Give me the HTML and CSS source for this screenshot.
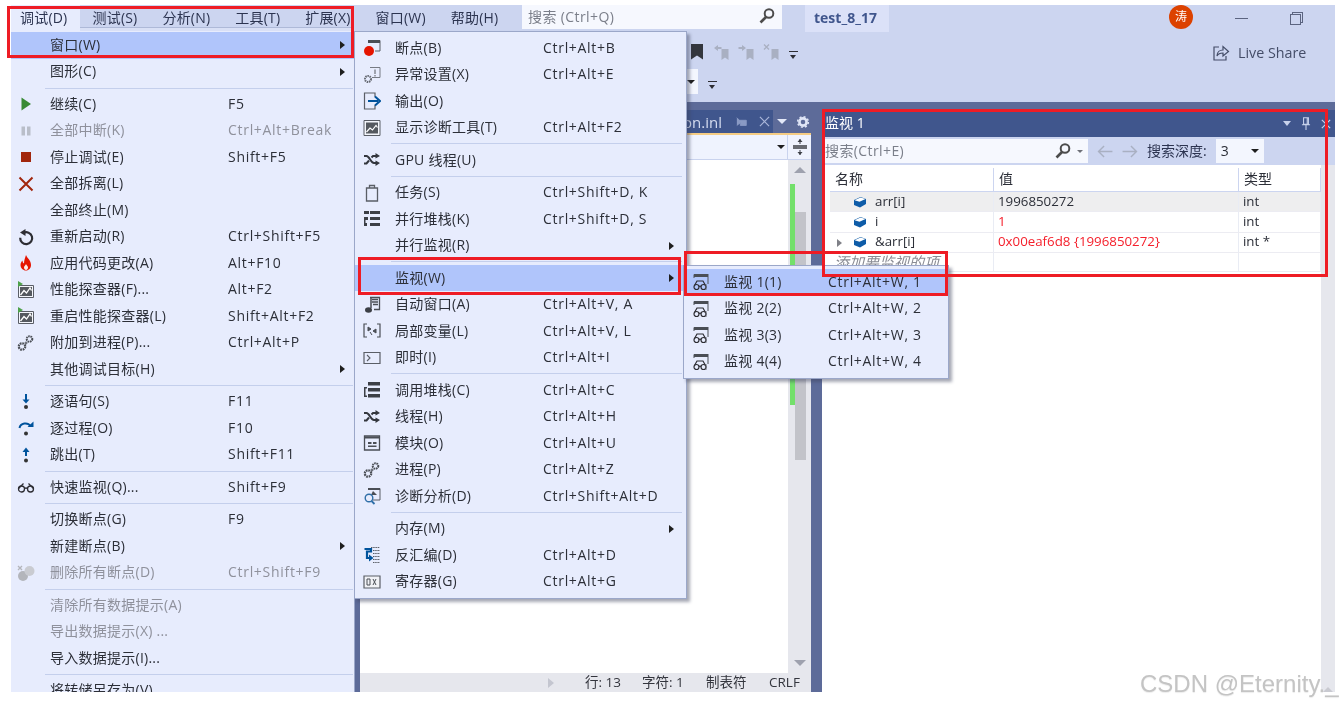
FILE: index.html
```html
<!DOCTYPE html>
<html lang="zh-CN">
<head>
<meta charset="utf-8">
<title>监视窗口</title>
<link rel="stylesheet" href="styles.css">
</head>
<body>
<svg class="defs" width="0" height="0" aria-hidden="true">
  <defs>
    <symbol id="i-play" viewBox="0 0 18 18"><path d="M4.500 2.500 14 9l-9.500 6.500z" fill="#388a34"/></symbol>
    <symbol id="i-pause" viewBox="0 0 18 18"><path d="M4.500 4.500h3.500v9H4.500zM10 4.500h3.500v9H10z" fill="#b9bec9"/></symbol>
    <symbol id="i-stop" viewBox="0 0 18 18"><path d="M4 4h10v10H4z" fill="#a1260d"/></symbol>
    <symbol id="i-x" viewBox="0 0 18 18"><path d="M2.500 2.500l13 13M15.500 2.500l-13 13" stroke="#a1260d" stroke-width="2" fill="none"/></symbol>
    <symbol id="i-restart" viewBox="0 0 18 18"><path d="M6.500 4.800A6 6 0 1 1 3.200 9.800" stroke="#2d2d33" stroke-width="2.200" fill="none"/><path d="M8.500 1v7L3 4.500z" fill="#2d2d33"/></symbol>
    <symbol id="i-flame" viewBox="0 0 18 18"><path d="M9 1c1 3 5 5 5 10 0 3-2 5.500-5 5.500S3.500 14 3.500 11c0-2 1-3.500 2-4.500 0 1.500.5 2.500 1.500 3C7 6.500 8 4 9 1z" fill="#e51400"/><path d="M9 10c.5 1.500 2 2 2 3.500S10 16 9 16s-2-1-2-2.500S8.500 11.500 9 10z" fill="#fdece8"/></symbol>
    <symbol id="i-perf" viewBox="0 0 18 18"><path d="M1.500 4.500h15v12h-15z" fill="#f4f6fc" stroke="#5a5e66"/><path d="M3 6h12v9H3z" fill="#55595f"/><path d="M3.500 14l3.500-4.500 2.500 2.500 3.500-5 1.500 2.500" stroke="#fff" stroke-width="1.300" fill="none"/><path d="M1 0v6l5-3z" fill="#4ea24a"/></symbol>
    <symbol id="i-gears" viewBox="0 0 18 18"><g fill="none" stroke="#4a4e55"><circle cx="12.500" cy="5" r="2.800" stroke-width="2" stroke-dasharray="1.600 .7"/><circle cx="5" cy="12.500" r="3.200" stroke-width="2.200" stroke-dasharray="1.700 .8"/><circle cx="9" cy="9" r="1"/></g></symbol>
    <symbol id="i-into" viewBox="0 0 18 18"><circle cx="9" cy="14" r="2" fill="#333"/><path d="M9 1v7" stroke="#00539c" stroke-width="2"/><path d="M5.500 6.500h7L9 10.500z" fill="#00539c"/></symbol>
    <symbol id="i-over" viewBox="0 0 18 18"><circle cx="9" cy="14.500" r="2" fill="#333"/><path d="M2.500 9a6 5.500 0 0 1 11-2" stroke="#00539c" stroke-width="2" fill="none"/><path d="M10.500 8h6V2.500z" fill="#00539c"/></symbol>
    <symbol id="i-out" viewBox="0 0 18 18"><circle cx="9" cy="14.500" r="2" fill="#333"/><path d="M9 10V4" stroke="#00539c" stroke-width="2"/><path d="M5.500 6h7L9 1.500z" fill="#00539c"/></symbol>
    <symbol id="i-glasses" viewBox="0 0 18 18"><g fill="none" stroke="#2d2d33" stroke-width="1.300"><circle cx="4.500" cy="11" r="3"/><circle cx="13.500" cy="11" r="3"/><path d="M7.500 10.500q1.500-1 3 0M1.500 10.500 6.500 5.500M16.500 10.500 11.500 5.500"/></g></symbol>
    <symbol id="i-nobp" viewBox="0 0 18 18"><circle cx="6" cy="12" r="5" fill="#b3b5bb"/><circle cx="12.500" cy="7" r="5" fill="#c9cbd1"/><path d="M1 2l4 4M5 2 1 6" stroke="#b3b5bb" stroke-width="1.300"/></symbol>
    <symbol id="i-bp" viewBox="0 0 18 18"><path d="M5 1.500h12V12h-5" fill="none" stroke="#5a5e66"/><path d="M5 1h12v3H5z" fill="#4a4e55"/><circle cx="6" cy="12" r="5" fill="#e51400"/></symbol>
    <symbol id="i-exc" viewBox="0 0 18 18"><path d="M7 1.500h10v10H9" fill="none" stroke="#777b84"/><path d="M12 3.500v4.500M12 9v1.500" stroke="#777b84" stroke-width="1.300"/><circle cx="5" cy="13" r="3" fill="none" stroke="#666a73" stroke-width="2" stroke-dasharray="1.500 .7"/></symbol>
    <symbol id="i-output" viewBox="0 0 18 18"><path d="M12 5V1H1.500v16H12v-4" fill="none" stroke="#5a5e66" stroke-width="1.200"/><path d="M5 9h10" stroke="#00539c" stroke-width="2"/><path d="M12 4.500 17 9l-5 4.500" fill="none" stroke="#00539c" stroke-width="2"/></symbol>
    <symbol id="i-diag" viewBox="0 0 18 18"><path d="M1 1.500h16v15H1z" fill="#f4f6fc" stroke="#5a5e66"/><path d="M3 3.500h12v11H3z" fill="#55595f"/><path d="M3.500 13l3.500-4 2.500 2 3.500-4.500 1.500 2" stroke="#fff" stroke-width="1.200" fill="none"/></symbol>
    <symbol id="i-gpu" viewBox="0 0 18 18"><path d="M1 5h2.500c3 0 4 7 7.500 7h2M1 12.500h2.500l2.500-3M8.500 6.500 10 5h3" fill="none" stroke="#33363d" stroke-width="2"/><path d="M12.500 2 17 5l-4.500 2.500zM12.500 9.500 17 12l-4.500 3z" fill="#33363d"/></symbol>
    <symbol id="i-task" viewBox="0 0 18 18"><path d="M3.500 4h11v13h-11z" fill="none" stroke="#5a5e66" stroke-width="1.300"/><path d="M6.500 4V1.500h5V4" fill="none" stroke="#5a5e66" stroke-width="1.300"/></symbol>
    <symbol id="i-par" viewBox="0 0 18 18"><g fill="#3c3f46"><path d="M7 1h10v3H7zM1 1h5v3H1zM7 7h10v3H7zM7 13h10v3H7z"/><path d="M1 7h3v1.500H2.500V13H4v3H1zM2.500 7H5v3H2.500z"/></g></symbol>
    <symbol id="i-autos" viewBox="0 0 18 18"><path d="M7 1.500h9.500v12H11" fill="none" stroke="#4a4e55" stroke-width="1.300"/><path d="M9 3.500h6M9 6h6M10 8.500h5" stroke="#4a4e55" stroke-width="1.500"/><path d="M8 2v10" stroke="#4a4e55" stroke-width="1.500"/><ellipse cx="5.500" cy="14" rx="3.500" ry="2.800" fill="#3c3f46"/></symbol>
    <symbol id="i-locals" viewBox="0 0 18 18"><path d="M4 2H1v13h3M14 2h3v13h-3" fill="none" stroke="#4a4e55" stroke-width="1.200"/><path d="M5 5l3 2-3 2zM13 7l-3 2 3 2zM7 10l2 3" fill="#4a4e55" stroke="#4a4e55"/></symbol>
    <symbol id="i-imm" viewBox="0 0 18 18"><path d="M1 3.500h16v11H1z" fill="none" stroke="#5a5e66" stroke-width="1.200"/><path d="M4 6l3 3-3 3" fill="none" stroke="#5a5e66" stroke-width="1.100"/></symbol>
    <symbol id="i-call" viewBox="0 0 18 18"><g fill="#3c3f46"><path d="M5 1h12v3.500H5zM5 7h12v3.500H5zM5 13h12v3.500H5z"/><path d="M1 6h3v1.500H2.500v7H4V16H1z"/></g></symbol>
    <symbol id="i-mod" viewBox="0 0 18 18"><path d="M1.500 2h15v14h-15z" fill="none" stroke="#4a4e55" stroke-width="1.300"/><path d="M2 2.500h14v2H2zM5 8h3.500v2H5zM10 8h3.500v2H10zM5 11.500h8.500v1.500H5z" fill="#4a4e55"/></symbol>
    <symbol id="i-dana" viewBox="0 0 18 18"><path d="M5 1.500h12V13H10" fill="none" stroke="#5a5e66"/><path d="M5 1h12v2H5z" fill="#4a4e55"/><path d="M10 4l4 4H8z" fill="#4a4e55"/><circle cx="6" cy="11" r="3.800" fill="none" stroke="#2f6fa8" stroke-width="1.400"/><path d="M8.500 14l3 3" stroke="#2f6fa8" stroke-width="1.800"/></symbol>
    <symbol id="i-dis" viewBox="0 0 18 18"><path d="M8 1.500h9M10 4.500h7M10 7.500h7M10 10.500h7M10 13.500h7M10 16.500h7" stroke="#5a5e66" stroke-dasharray="1.500 .7" fill="none"/><path d="M1.500 3H8v2.500H4V12h4" fill="none" stroke="#00539c" stroke-width="2.200"/><path d="M6 8.500v7L10.500 12z" fill="#00539c"/></symbol>
    <symbol id="i-reg" viewBox="0 0 18 18"><path d="M1 3h16v12H1z" fill="#f1f2f6" stroke="#5a5e66" stroke-width="1.200"/><path d="M4 6h3v6H4zM10 6l3 6M13 6l-3 6" fill="none" stroke="#4a4e55"/></symbol>
    <symbol id="i-watch" viewBox="0 0 18 18"><path d="M2 1.500h14V11M2 1.500V5" fill="none" stroke="#5a5e66" stroke-width="1.100"/><path d="M2 1h14v3H2z" fill="#4a4e55"/><g fill="none" stroke="#2d2d33" stroke-width="1.200"><circle cx="4.500" cy="14" r="2.500"/><circle cx="11.500" cy="14" r="2.500"/><path d="M7 13.500q1-.8 2 0M2.500 12.500 5 8h6l2.500 4.500"/></g><path d="M14 11v6" stroke="#5a5e66" stroke-width=".8"/></symbol>
    <symbol id="i-mark" viewBox="0 0 18 18"><path d="M3 1h12v15.500l-6-4-6 4z"/></symbol>
    <symbol id="i-mark-dim" viewBox="0 0 18 18"><path d="M8.500 6h7v11l-3.500-2.500L8.500 17z" fill="#a9b0c2"/><path d="M1 5l4-3v2h3.500v2H5v2z" fill="#a9b0c2"/></symbol>
    <symbol id="i-mark-dim2" viewBox="0 0 18 18"><path d="M8.500 6h7v11l-3.500-2.500L8.500 17z" fill="#a9b0c2"/><path d="M8 5 4 2v2H.5v2H4v2z" fill="#a9b0c2"/></symbol>
    <symbol id="i-mark-dim3" viewBox="0 0 18 18"><path d="M8.500 6h7v11l-3.500-2.500L8.500 17z" fill="#a9b0c2"/><path d="M1 1.500l5 5M6 1.500l-5 5" stroke="#a9b0c2" stroke-width="1.300"/></symbol>
    <symbol id="i-search" viewBox="0 0 18 18"><circle cx="11" cy="6.500" r="4.300" fill="none" stroke="#4c4c4c" stroke-width="2"/><path d="M8 10 2.500 15.500" stroke="#4c4c4c" stroke-width="2.600"/></symbol>
    <symbol id="i-var" viewBox="0 0 14 14"><path d="M1 5 7.500 2 13 4v5l-6 3.500L1 10z" fill="#0e5ca8"/><path d="M1.500 5.200 7.500 2.500l5 1.600-6 2.700z" fill="#fff"/></symbol>
  </defs>
</svg>

<main class="shot">
  <header class="menubar">
    <span class="mb-item mb-open">调试(D)</span>
    <span class="mb-item">测试(S)</span>
    <span class="mb-item">分析(N)</span>
    <span class="mb-item">工具(T)</span>
    <span class="mb-item">扩展(X)</span>
    <span class="mb-item">窗口(W)</span>
    <span class="mb-item">帮助(H)</span>
    <div class="quick">
      <span>搜索 (Ctrl+Q)</span>
      <svg class="quick-ico"><use href="#i-search"/></svg>
    </div>
    <div class="sol">test_8_17</div>
    <div class="avatar">涛</div>
    <span class="min"></span>
    <span class="restore"></span>
  </header>

  <section class="toolband">
    <div class="tool-row">
      <svg class="tb-ico tb-dark"><use href="#i-mark"/></svg>
      <svg class="tb-ico"><use href="#i-mark-dim"/></svg>
      <svg class="tb-ico"><use href="#i-mark-dim2"/></svg>
      <svg class="tb-ico"><use href="#i-mark-dim3"/></svg>
      <span class="overflow"></span>
      <div class="live">
        <svg class="live-ico" viewBox="0 0 18 18"><path d="M7 3H2v13h12v-4" fill="none" stroke="#444d68" stroke-width="1.200"/><path d="M5 12c0-4 3-6 6-6V2.500l5.500 5L11 12V9c-3 0-5 1-6 3z" fill="none" stroke="#444d68" stroke-width="1.200"/></svg>
        <span>Live Share</span>
      </div>
    </div>
    <div class="tool-row tool-row-2">
      <div class="tb-select"><i class="caret"></i></div>
      <span class="overflow"></span>
    </div>
  </section>

  <section class="work">
    <div class="editor">
      <div class="tabs">
        <div class="tab"><span>on.inl</span>
          <svg class="tab-pin" viewBox="0 0 14 14"><path d="M1 2l3 3h8v6H5V8L1 11M4 5v3" fill="#8a9ac4" stroke="#8a9ac4"/></svg>
          <svg class="tab-x" viewBox="0 0 12 12"><path d="M1 1l10 10M11 1 1 11" stroke="#a9b6d9" stroke-width="1.300"/></svg>
        </div>
        <i class="tab-drop"></i>
        <svg class="tab-gear" viewBox="0 0 14 14"><circle cx="7" cy="7" r="3.600" fill="none" stroke="#dfe5f6" stroke-width="2.600"/><circle cx="7" cy="7" r="5.300" fill="none" stroke="#dfe5f6" stroke-width="1.600" stroke-dasharray="2 2.150"/></svg>
      </div>
      <div class="navbar">
        <div class="nav-drop"><i class="caret"></i></div>
        <svg class="nav-split" viewBox="0 0 14 18"><path d="M0 8h14M0 10h14" stroke="#3c3f46" stroke-width="1.300"/><path d="M7 1v5M7 12v5" stroke="#3c3f46"/><path d="M4.500 4 7 1l2.500 3zM4.500 14 7 17l2.500-3z" fill="#3c3f46"/></svg>
      </div>
      <div class="edit-body">
        <div class="code"></div>
        <div class="vscroll">
          <i class="up"></i>
          <div class="track">
            <div class="green"></div>
            <div class="thumb"></div>
          </div>
          <i class="down"></i>
        </div>
      </div>
      <footer class="status">
        <i class="st-arrow"></i>
        <span class="st-line">行: 13</span>
        <span class="st-col">字符: 1</span>
        <span class="st-tab">制表符</span>
        <span>CRLF</span>
      </footer>
    </div>

    <div class="watch">
      <div class="w-title">
        <span>监视 1</span>
        <i class="w-drop"></i>
        <svg class="w-pin" viewBox="0 0 12 16"><path d="M3 1h6v8H3zM1 9.500h10M6 10v6M7.500 1v8" stroke="#c8d2ec" stroke-width="1.300" fill="none"/></svg>
        <svg class="w-x" viewBox="0 0 12 12"><path d="M1 1l10 10M11 1 1 11" stroke="#c8d2ec" stroke-width="1.400"/></svg>
      </div>
      <div class="w-tools">
        <div class="w-search">
          <span>搜索(Ctrl+E)</span>
          <svg class="w-sico"><use href="#i-search"/></svg>
          <i class="caret caret-sm"></i>
        </div>
        <svg class="w-arrow" viewBox="0 0 18 14"><path d="M17 7H2M8 1 2 7l6 6" fill="none" stroke="#a9b0c2" stroke-width="1.500"/></svg>
        <svg class="w-arrow" viewBox="0 0 18 14"><path d="M1 7h15M10 1l6 6-6 6" fill="none" stroke="#a9b0c2" stroke-width="1.500"/></svg>
        <span class="w-depth">搜索深度:</span>
        <div class="w-select"><span>3</span><i class="caret"></i></div>
      </div>
      <div class="w-body">
        <div class="w-table">
          <div class="w-row w-head"><span class="c-name">名称</span><span>值</span><span>类型</span></div>
          <div class="w-row w-sel"><span class="c-name c-var"><svg class="var"><use href="#i-var"/></svg>arr[i]</span><span>1996850272</span><span>int</span></div>
          <div class="w-row"><span class="c-name c-var"><svg class="var"><use href="#i-var"/></svg>i</span><span class="red">1</span><span>int</span></div>
          <div class="w-row"><span class="c-name c-var"><i class="exp"></i><svg class="var"><use href="#i-var"/></svg>&amp;arr[i]</span><span class="red">0x00eaf6d8 {1996850272}</span><span>int *</span></div>
          <div class="w-row w-add"><span class="c-name">添加要监视的项</span><span></span><span></span></div>
        </div>
        <div class="w-scroll"><i class="up"></i></div>
      </div>
    </div>
  </section>

  <nav class="menu menu-main">
    <div class="item hot"><span class="ico"></span><span class="label">窗口(W)</span><i class="sub"></i></div>
    <div class="item"><span class="ico"></span><span class="label">图形(C)</span><i class="sub"></i></div>
    <hr>
    <div class="item"><svg class="ico"><use href="#i-play"/></svg><span class="label">继续(C)</span><span class="key">F5</span></div>
    <div class="item off"><svg class="ico"><use href="#i-pause"/></svg><span class="label">全部中断(K)</span><span class="key">Ctrl+Alt+Break</span></div>
    <div class="item"><svg class="ico"><use href="#i-stop"/></svg><span class="label">停止调试(E)</span><span class="key">Shift+F5</span></div>
    <div class="item"><svg class="ico"><use href="#i-x"/></svg><span class="label">全部拆离(L)</span></div>
    <div class="item"><span class="ico"></span><span class="label">全部终止(M)</span></div>
    <div class="item"><svg class="ico"><use href="#i-restart"/></svg><span class="label">重新启动(R)</span><span class="key">Ctrl+Shift+F5</span></div>
    <div class="item"><svg class="ico"><use href="#i-flame"/></svg><span class="label">应用代码更改(A)</span><span class="key">Alt+F10</span></div>
    <div class="item"><svg class="ico"><use href="#i-perf"/></svg><span class="label">性能探查器(F)...</span><span class="key">Alt+F2</span></div>
    <div class="item"><svg class="ico"><use href="#i-perf"/></svg><span class="label">重启性能探查器(L)</span><span class="key">Shift+Alt+F2</span></div>
    <div class="item"><svg class="ico"><use href="#i-gears"/></svg><span class="label">附加到进程(P)...</span><span class="key">Ctrl+Alt+P</span></div>
    <div class="item"><span class="ico"></span><span class="label">其他调试目标(H)</span><i class="sub"></i></div>
    <hr>
    <div class="item"><svg class="ico"><use href="#i-into"/></svg><span class="label">逐语句(S)</span><span class="key">F11</span></div>
    <div class="item"><svg class="ico"><use href="#i-over"/></svg><span class="label">逐过程(O)</span><span class="key">F10</span></div>
    <div class="item"><svg class="ico"><use href="#i-out"/></svg><span class="label">跳出(T)</span><span class="key">Shift+F11</span></div>
    <hr>
    <div class="item"><svg class="ico"><use href="#i-glasses"/></svg><span class="label">快速监视(Q)...</span><span class="key">Shift+F9</span></div>
    <hr>
    <div class="item"><span class="ico"></span><span class="label">切换断点(G)</span><span class="key">F9</span></div>
    <div class="item"><span class="ico"></span><span class="label">新建断点(B)</span><i class="sub"></i></div>
    <div class="item off"><svg class="ico"><use href="#i-nobp"/></svg><span class="label">删除所有断点(D)</span><span class="key">Ctrl+Shift+F9</span></div>
    <hr>
    <div class="item off"><span class="ico"></span><span class="label">清除所有数据提示(A)</span></div>
    <div class="item off"><span class="ico"></span><span class="label">导出数据提示(X) ...</span></div>
    <div class="item"><span class="ico"></span><span class="label">导入数据提示(I)...</span></div>
    <hr>
    <div class="item"><span class="ico"></span><span class="label">将转储另存为(V)...</span></div>
  </nav>

  <nav class="menu menu-win">
    <div class="item"><svg class="ico"><use href="#i-bp"/></svg><span class="label">断点(B)</span><span class="key">Ctrl+Alt+B</span></div>
    <div class="item"><svg class="ico"><use href="#i-exc"/></svg><span class="label">异常设置(X)</span><span class="key">Ctrl+Alt+E</span></div>
    <div class="item"><svg class="ico"><use href="#i-output"/></svg><span class="label">输出(O)</span></div>
    <div class="item"><svg class="ico"><use href="#i-diag"/></svg><span class="label">显示诊断工具(T)</span><span class="key">Ctrl+Alt+F2</span></div>
    <hr>
    <div class="item"><svg class="ico"><use href="#i-gpu"/></svg><span class="label">GPU 线程(U)</span></div>
    <hr>
    <div class="item"><svg class="ico"><use href="#i-task"/></svg><span class="label">任务(S)</span><span class="key">Ctrl+Shift+D, K</span></div>
    <div class="item"><svg class="ico"><use href="#i-par"/></svg><span class="label">并行堆栈(K)</span><span class="key">Ctrl+Shift+D, S</span></div>
    <div class="item"><span class="ico"></span><span class="label">并行监视(R)</span><i class="sub"></i></div>
    <hr>
    <div class="item hot"><span class="ico"></span><span class="label">监视(W)</span><i class="sub"></i></div>
    <div class="item"><svg class="ico"><use href="#i-autos"/></svg><span class="label">自动窗口(A)</span><span class="key">Ctrl+Alt+V, A</span></div>
    <div class="item"><svg class="ico"><use href="#i-locals"/></svg><span class="label">局部变量(L)</span><span class="key">Ctrl+Alt+V, L</span></div>
    <div class="item"><svg class="ico"><use href="#i-imm"/></svg><span class="label">即时(I)</span><span class="key">Ctrl+Alt+I</span></div>
    <hr>
    <div class="item"><svg class="ico"><use href="#i-call"/></svg><span class="label">调用堆栈(C)</span><span class="key">Ctrl+Alt+C</span></div>
    <div class="item"><svg class="ico"><use href="#i-gpu"/></svg><span class="label">线程(H)</span><span class="key">Ctrl+Alt+H</span></div>
    <div class="item"><svg class="ico"><use href="#i-mod"/></svg><span class="label">模块(O)</span><span class="key">Ctrl+Alt+U</span></div>
    <div class="item"><svg class="ico"><use href="#i-gears"/></svg><span class="label">进程(P)</span><span class="key">Ctrl+Alt+Z</span></div>
    <div class="item"><svg class="ico"><use href="#i-dana"/></svg><span class="label">诊断分析(D)</span><span class="key">Ctrl+Shift+Alt+D</span></div>
    <hr>
    <div class="item"><span class="ico"></span><span class="label">内存(M)</span><i class="sub"></i></div>
    <div class="item"><svg class="ico"><use href="#i-dis"/></svg><span class="label">反汇编(D)</span><span class="key">Ctrl+Alt+D</span></div>
    <div class="item"><svg class="ico"><use href="#i-reg"/></svg><span class="label">寄存器(G)</span><span class="key">Ctrl+Alt+G</span></div>
  </nav>

  <nav class="menu menu-watch">
    <div class="item hot"><svg class="ico"><use href="#i-watch"/></svg><span class="label">监视 1(1)</span><span class="key">Ctrl+Alt+W, 1</span></div>
    <div class="item"><svg class="ico"><use href="#i-watch"/></svg><span class="label">监视 2(2)</span><span class="key">Ctrl+Alt+W, 2</span></div>
    <div class="item"><svg class="ico"><use href="#i-watch"/></svg><span class="label">监视 3(3)</span><span class="key">Ctrl+Alt+W, 3</span></div>
    <div class="item"><svg class="ico"><use href="#i-watch"/></svg><span class="label">监视 4(4)</span><span class="key">Ctrl+Alt+W, 4</span></div>
  </nav>
</main>
<div class="mark mark-a"></div>
<div class="mark mark-b"></div>
<div class="mark mark-c"></div>
<div class="mark mark-d"></div>
<div class="wm">CSDN @Eternity._</div>
</body>
</html>
```

FILE: styles.css
```css
* { box-sizing: border-box; }
html, body { margin: 0; height: 100%; background: #fff; overflow: hidden; }
body {
  position: relative;
  font: 14px/1.2 "Open Sans", "Noto Sans CJK SC", sans-serif;
  color: #2c2f38;
}
.defs { position: absolute; }
.shot {
  position: absolute;
  left: 11px;
  top: 5px;
  width: 1324px;
  height: 687px;
  display: flex;
  flex-direction: column;
  background: #ccd5f0;
  overflow: hidden;
  filter: blur(.4px);
}

/* menu bar */
.menubar { height: 26px; display: flex; align-items: center; flex: none; position: relative; }
.menubar::after {
  content: ""; position: absolute; left: 69px; top: 22px; width: 274px; height: 4px;
  border-top: 1px solid #aeb9d8; background: #d9e0f6;
}
.mb-item { padding: 0 12.500px; white-space: nowrap; color: #2c3450; letter-spacing: .2px; }
.mb-open { background: #e7ecfd; align-self: stretch; display: flex; align-items: center; padding: 0 0 0 9px; width: 69px; }
.quick {
  position: absolute; left: 511px; top: 0; width: 260px; height: 24px;
  background: #f6f8fe; display: flex; align-items: center; justify-content: space-between;
  padding: 0 6px; color: #7b7f8a; letter-spacing: .4px;
}
.quick-ico { width: 18px; height: 18px; margin-bottom: 3px; }
.sol {
  position: absolute; left: 794px; top: 0; width: 84px; height: 27px;
  background: #dbe1f8; color: #40568d; font-weight: 700; font-size: 14px;
  display: flex; align-items: center; padding-left: 9px;
}
.avatar {
  position: absolute; left: 1158px; top: 0; width: 24px; height: 24px; border-radius: 50%;
  background: #dc4200; color: #fff; font-size: 12px;
  display: flex; align-items: center; justify-content: center;
}
.min { position: absolute; left: 1224px; top: 13px; width: 13px; height: 1px; background: #5b6480; }
.restore {
  position: absolute; left: 1279px; top: 9px; width: 11px; height: 11px;
  border: 1px solid #5b6480; box-shadow: 2px -2px 0 -1px #ccd5f0, 2px -2px 0 0 #5b6480;
}

/* toolbars */
.toolband { height: 71px; flex: none; padding: 8px 0 0 676px; display: flex; flex-direction: column; }
.tool-row { height: 25px; display: flex; align-items: center; position: relative; }
.tb-ico { width: 18px; height: 18px; margin-right: 7px; }
.tb-dark { fill: #33363d; margin-left: 1px; }
.overflow { display: block; width: 9px; height: 8px; margin: 6px 0 0 1px; border-top: 1px solid #2d2d33; position: relative; }
.overflow::after {
  content: ""; position: absolute; left: 1px; top: 3px;
  border: 3.500px solid transparent; border-top: 4px solid #2d2d33; border-bottom: 0;
}
.live { position: absolute; left: 525px; top: 5px; display: flex; align-items: center; gap: 8px; color: #444d68; font-size: 14.300px; }
.live-ico { width: 18px; height: 18px; }
.tool-row-2 { margin-top: 5px; margin-left: -20px; }
.tb-select { width: 31px; height: 25px; background: #f3f6fe; display: flex; align-items: center; justify-content: flex-end; padding-right: 3px; margin-right: 9px; }
.caret { display: block; border: 4px solid transparent; border-top: 4px solid #1e1e1e; border-bottom: 0; }
.caret-sm { border-width: 3px; border-top-color: #6e7078; border-bottom: 0; }

/* workspace */
.work { flex: 1; min-height: 0; background: #5d6b99; display: flex; padding: 8px 0 0 349px; }
.editor { width: 451px; flex: none; display: flex; flex-direction: column; }
.tabs { height: 23px; flex: none; display: flex; align-items: center; justify-content: flex-end; }
.tab {
  height: 23px; width: 90px; background: #40568d; color: #d5dcf0;
  display: flex; align-items: center; margin-right: 4px;
}
.tab span { margin-right: 14px; font-size: 15px; }
.tab-pin { width: 12px; height: 12px; margin-right: 11px; }
.tab-x { width: 11px; height: 11px; }
.tab-drop { border: 5px solid transparent; border-top: 5px solid #e4e9f8; border-bottom: 0; margin-right: 9px; }
.tab-gear { width: 14px; height: 14px; margin-right: 1px; }
.navbar {
  height: 27px; flex: none; background: #eff3fe; border-top: 2px solid #f5cc84;
  display: flex; align-items: center; border-bottom: 1px solid #c9d3ee;
}
.nav-drop { width: 428px; display: flex; justify-content: flex-end; padding-right: 2px; border-right: 1px solid #c9d3ee; height: 100%; align-items: center; }
.nav-split { width: 14px; height: 18px; margin-left: 5px; }
.edit-body { flex: 1; min-height: 0; display: flex; }
.code { flex: 1; background: #fff; }
.vscroll { width: 23px; flex: none; background: #e6e7ed; display: flex; flex-direction: column; align-items: center; padding: 7px 0 7px; }
.up { display: block; border: 6px solid transparent; border-bottom: 6px solid #9ea1ae; border-top: 0; flex: none; }
.down { display: block; border: 6px solid transparent; border-top: 6px solid #9ea1ae; border-bottom: 0; flex: none; }
.track { flex: 1; width: 100%; position: relative; padding: 11px 0 0 2px; display: flex; align-items: flex-start; min-height: 0; }
.green { width: 5px; height: 221px; background: #73e06b; }
.thumb { width: 11px; height: 248px; margin-top: 28px; background: #c2c3c9; }
.status {
  height: 19px; flex: none; background: #e6e7ed; display: flex; align-items: center;
  padding-left: 188px; font-size: 13.500px; color: #33353d;
}
.st-arrow { border: 5px solid transparent; border-left: 6px solid #c4c6d0; border-right: 0; margin-right: 31px; }
.st-line { width: 57px; }
.st-col { width: 64px; }
.st-tab { width: 63px; }

/* watch window */
.watch { margin-left: 11px; flex: 1; min-width: 0; display: flex; flex-direction: column; }
.w-title { height: 27px; flex: none; background: #40568d; color: #fff; display: flex; align-items: center; padding: 0 4px 0 3px; }
.w-title span { margin-right: auto; }
.w-drop { border: 4px solid transparent; border-top: 5px solid #c8d2ec; border-bottom: 0; margin-right: 10px; }
.w-pin { width: 10px; height: 13px; margin-right: 10px; }
.w-x { width: 10px; height: 10px; }
.w-tools { height: 28px; flex: none; background: #ccd5f0; display: flex; align-items: center; padding-left: 2px; }
.w-search { width: 264px; height: 24px; background: #f6f8fe; display: flex; align-items: center; padding: 0 5px 0 1px; color: #7b7f8a; margin-right: 8px; letter-spacing: .4px; }
.w-search span { margin-right: auto; }
.w-sico { width: 18px; height: 18px; margin-right: 5px; }
.w-arrow { width: 18px; height: 13px; margin-right: 7px; }
.w-depth { margin-left: 1px; color: #2c3450; }
.w-select { width: 48px; height: 24px; margin-left: 9px; background: #f3f6fe; display: flex; align-items: center; justify-content: space-between; padding: 0 5px; }
.w-body { flex: 1; min-height: 0; display: flex; background: #fff; }
.w-table { flex: 1; padding: 3px 0 0 8px; font-size: 13.300px; }
.w-row { display: grid; grid-template-columns: 164px 245px 82px; height: 20.300px; border-bottom: 1px solid #ececf2; }
.w-row > span { display: flex; align-items: center; padding-left: 4px; border-right: 1px solid #e9ecf4; white-space: nowrap; min-width: 0; overflow: hidden; }
.w-head { height: 24px; font-size: 14px; border-bottom: 1px solid #ccd5f0; background: #fff; }
.w-head > span { border-right-color: #ccd5f0; padding-left: 5px; }
.w-sel { background: #eeeeef; }
.c-var { padding-left: 23px !important; position: relative; }
.var { width: 14px; height: 14px; margin-right: 8px; flex: none; }
.exp { position: absolute; left: 7px; top: 6px; border: 4px solid transparent; border-left: 5px solid #7f8087; border-right: 0; }
.red { color: #f5202c; }
.w-add { color: #8a8c94; font-style: italic; height: 19px; font-size: 15px; }
.w-scroll { width: 14px; flex: none; background: #e6e7ed; display: flex; justify-content: center; padding-top: 7px; }
.w-scroll .up { border-width: 5px; border-bottom-color: #c9cad1; border-top: 0; }

/* menus */
.menu {
  position: absolute; background: #e7ecfd; border: 1px solid #9ba7c9;
  box-shadow: 3px 3px 3px rgba(60, 65, 90, .45);
  --ico-l: 8px; --ico-r: 14px; --lab: 148px; --sub-r: 12px;
}
.menu-main {
  left: 0; top: 26px; width: 344px; height: 662px; overflow: hidden;
  border-width: 0 1px 0 0; padding-top: 1px; box-shadow: none;
  --ico-l: 6px; --ico-r: 15px; --lab: 178px; --sub-r: 9px; --hr-l: 34px; --hr-r: 1px;
}
.menu-win { left: 343px; top: 26px; width: 333px; padding: 2.750px 0; --hr-l: 36px; --hr-r: 4px; }
.menu-watch { left: 672px; top: 260px; width: 266px; padding: 2.750px 0; --lab: 104px; }
.item { height: 26.500px; display: flex; align-items: center; white-space: nowrap; }
.item.hot { background: #b0c5fb; }
.item.off { color: #8f919c; }
.ico { display: block; width: 18px; height: 18px; flex: none; margin: 0 var(--ico-r) 0 var(--ico-l); }
.label { width: var(--lab); flex: none; letter-spacing: .25px; }
.key { flex: 1; letter-spacing: .7px; }
.sub { margin-left: auto; margin-right: var(--sub-r); border: 4px solid transparent; border-left: 5px solid #1e1e1e; border-right: 0; }
.menu hr { border: 0; margin: 2.500px var(--hr-r, 4px) 2.500px var(--hr-l, 36px); height: 1px; background: #c4cfec; }

/* annotation frames */
.mark { position: absolute; border: 3px solid #ee1c25; filter: blur(.4px); }
.mark-a { left: 7px; top: 6px; width: 347px; height: 52px; }
.mark-b { left: 358px; top: 257px; width: 323px; height: 38px; }
.mark-c { left: 684px; top: 251px; width: 264px; height: 45px; }
.mark-d { left: 822px; top: 109px; width: 506px; height: 168px; }

/* watermark */
.wm {
  position: absolute; left: 1140px; top: 670px;
  font: 24px/1.2 "Liberation Sans", sans-serif; color: #c4c4c4;
  text-shadow: 0 1px 1px rgba(0, 0, 0, .08); white-space: nowrap; filter: blur(.3px);
}
```
